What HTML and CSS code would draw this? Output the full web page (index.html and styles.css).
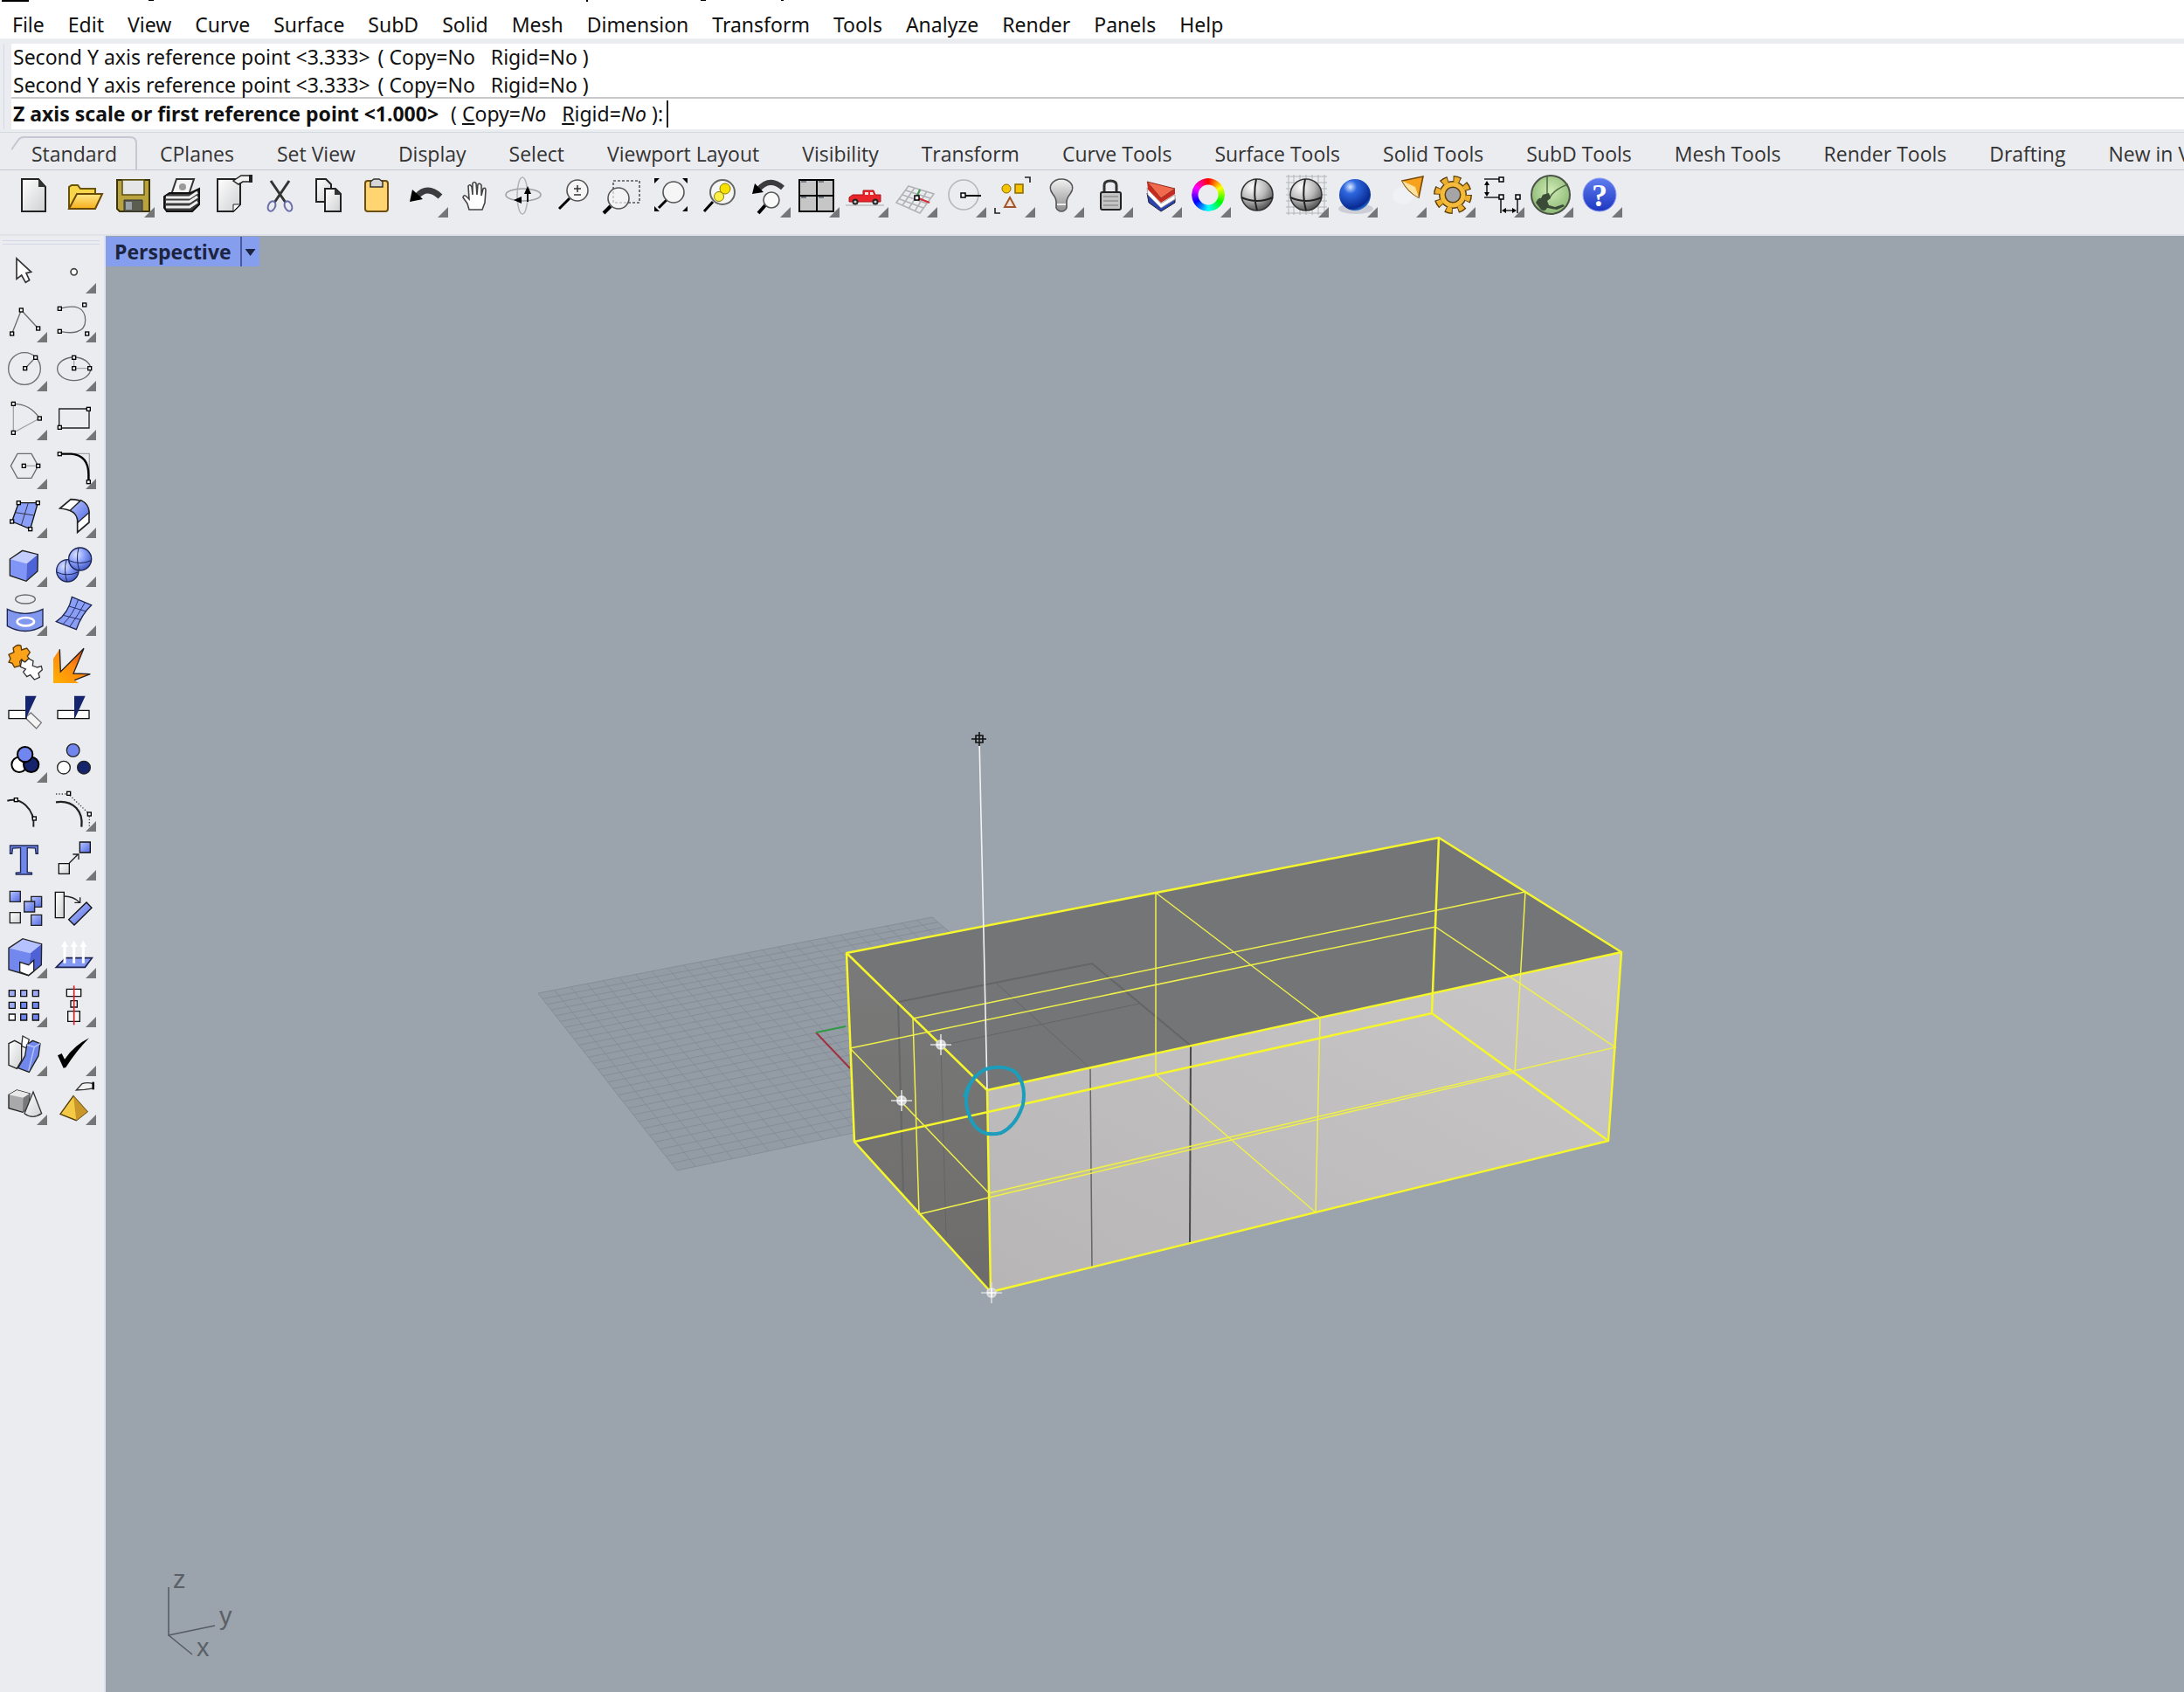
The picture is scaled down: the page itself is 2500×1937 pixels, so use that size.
FILE: index.html
```html
<!DOCTYPE html>
<html lang="en">
<head>
<meta charset="utf-8">
<title>Perspective - Modeler</title>
<link rel="stylesheet" href="styles.css">
</head>
<body>
<svg class="defs" aria-hidden="true">
  <defs>
    <linearGradient id="gBlue" x1="0" y1="0" x2="1" y2="1"><stop offset="0" stop-color="#b9c6ff"/><stop offset="1" stop-color="#5068e2"/></linearGradient>
    <linearGradient id="gGray" x1="0" y1="0" x2="1" y2="1"><stop offset="0" stop-color="#ffffff"/><stop offset="1" stop-color="#cfd0d2"/></linearGradient>
    <linearGradient id="gMetal" x1="0" y1="0" x2="0" y2="1"><stop offset="0" stop-color="#f2f2f2"/><stop offset="1" stop-color="#8c8c8e"/></linearGradient>
    <linearGradient id="gFolder" x1="0" y1="0" x2="0" y2="1"><stop offset="0" stop-color="#ffe989"/><stop offset="1" stop-color="#f6ae1b"/></linearGradient>
    <linearGradient id="gFire" x1="0" y1="1" x2="1" y2="0"><stop offset="0" stop-color="#ffb100"/><stop offset=".5" stop-color="#ff8a10"/><stop offset="1" stop-color="#d8361c"/></linearGradient>
    <radialGradient id="gBallBlue" cx=".35" cy=".3" r=".75"><stop offset="0" stop-color="#dfe6ff"/><stop offset=".5" stop-color="#869cf8"/><stop offset="1" stop-color="#4358c4"/></radialGradient>
    <radialGradient id="gBallGray" cx=".35" cy=".25" r=".85"><stop offset="0" stop-color="#ffffff"/><stop offset=".5" stop-color="#b9b9b9"/><stop offset="1" stop-color="#3c3c3c"/></radialGradient>
    <radialGradient id="gBallDeep" cx=".35" cy=".25" r=".85"><stop offset="0" stop-color="#dcebff"/><stop offset=".25" stop-color="#2f68e0"/><stop offset=".8" stop-color="#082a92"/><stop offset="1" stop-color="#3fa3f0"/></radialGradient>
    <radialGradient id="gBallGreen" cx=".5" cy=".4" r=".7"><stop offset="0" stop-color="#cfeab5"/><stop offset="1" stop-color="#7fb068"/></radialGradient>
    <linearGradient id="gHelp" x1="0" y1="0" x2="0" y2="1"><stop offset="0" stop-color="#5f7df0"/><stop offset="1" stop-color="#1c35c0"/></linearGradient>
    <linearGradient id="gFront" x1="0" y1="1" x2="1" y2="0"><stop offset="0" stop-color="#b7b5b5"/><stop offset="1" stop-color="#c9c7c8"/></linearGradient>
    <linearGradient id="gEnd" x1="0" y1="0" x2="0" y2="1"><stop offset="0" stop-color="#7a7a7a"/><stop offset="1" stop-color="#6d6c6a"/></linearGradient>
    <rect id="node" x="-6" y="-6" width="12" height="12" fill="#fff" stroke="#000" stroke-width="4"/>
    <rect id="dot" x="-2" y="-2" width="5" height="5" fill="#fff" stroke="#000" stroke-width="1.5"/>
    <g id="snap"><path d="M-12 0H12M0-12V12" stroke="#dcdcdc" stroke-width="1.6"/><circle r="5" fill="#c9cacc" stroke="#dedede" stroke-width="2"/><path d="M-5 0H5M0-5V5" stroke="#fff" stroke-width="1.6"/></g>
  </defs>
</svg>

<header class="top">
  <svg class="titlebar" viewBox="0 0 900 2" width="900" height="2" aria-hidden="true"><path d="M2 0H33V2H2ZM170 0h6v1h-6ZM671 0h2v2h-2ZM802 0h6v1h-6ZM894 0h3v1h-3Z"/></svg>
  <nav class="menubar">
    <button>File</button><button>Edit</button><button>View</button><button>Curve</button><button>Surface</button><button>SubD</button><button>Solid</button><button>Mesh</button><button>Dimension</button><button>Transform</button><button>Tools</button><button>Analyze</button><button>Render</button><button>Panels</button><button>Help</button>
  </nav>
</header>

<section class="command">
  <div class="history">
    <p>Second Y axis reference point &lt;3.333&gt; <span class="opts">( Copy=No <span class="opt">Rigid=No )</span></span></p>
    <p>Second Y axis reference point &lt;3.333&gt; <span class="opts">( Copy=No <span class="opt">Rigid=No )</span></span></p>
  </div>
  <div class="prompt">
    <label for="cmd"><b>Z axis scale or first reference point &lt;1.000&gt;</b> ( <u>C</u>opy=<i>No</i> <span class="opt"><u>R</u>igid=<i>No</i> ):</span></label>
    <input id="cmd" type="text" autocomplete="off">
  </div>
</section>

<section class="toolbars">
  <div class="tabs">
    <button class="active"><svg class="edge" viewBox="0 0 144 38" preserveAspectRatio="none" aria-hidden="true"><path d="M0 15L8 4Q10 1 14 1H136Q143 1 143 8V38"/></svg>Standard</button><button>CPlanes</button><button>Set View</button><button>Display</button><button>Select</button><button>Viewport Layout</button><button>Visibility</button><button>Transform</button><button>Curve Tools</button><button>Surface Tools</button><button>Solid Tools</button><button>SubD Tools</button><button>Mesh Tools</button><button>Render Tools</button><button>Drafting</button><button>New in V7</button>
  </div>
  <div class="tools">
    <button aria-label="New"><svg viewBox="0 0 56 56"><path d="M15 9H34L42 18V46H15Z" fill="url(#gGray)" stroke="#222" stroke-width="2"/><path d="M34 9V18H42Z" fill="#333"/></svg></button>
    <button aria-label="Open"><svg viewBox="0 0 56 56"><path d="M13 43V18L16 16H23L26 20H43V26" fill="#f8d649" stroke="#6b5306" stroke-width="2"/><path d="M13 43L22 26H51L43 43Z" fill="url(#gFolder)" stroke="#6b4a06" stroke-width="2"/></svg></button>
    <button class="more" aria-label="Save"><svg viewBox="0 0 56 56"><path d="M12 10H49V46H15L12 43Z" fill="#b9a33f" stroke="#3c3508" stroke-width="2"/><path d="M18 10H43V27H18Z" fill="#e4e6e8" stroke="#5b5010" stroke-width="1.5"/><path d="M20 33H41V46H20Z" fill="#5a5d50" stroke="#333"/><path d="M22 35h7v9h-7z" fill="#98a0a8"/></svg></button>
    <button aria-label="Print"><svg viewBox="0 0 56 56"><path d="M18 27L24 9H44L38 27Z" fill="#f5f5f5" stroke="#333" stroke-width="2"/><circle cx="31" cy="18" r="4" fill="#9a9a9a"/><path d="M10 29L16 25H40L50 20V38L42 46H13L10 42Z" fill="#3b3b3b" stroke="#111" stroke-width="2"/><path d="M12 30H39L48 24M12 35H39L48 29M12 41H39L48 35" stroke="#eee" stroke-width="3" fill="none"/></svg></button>
    <button aria-label="Document properties"><svg viewBox="0 0 56 56"><path d="M15 9H41V38L33 46H15Z" fill="url(#gGray)" stroke="#222" stroke-width="2"/><path d="M41 38H33V46Z" fill="#fff" stroke="#222"/><path d="M33 11L42 5H54V12H44L39 15Z" fill="#f2f2f2" stroke="#222" stroke-width="1.5"/><path d="M51 4h4v9h-4z" fill="#222"/></svg></button>
    <button aria-label="Cut"><svg viewBox="0 0 56 56"><path d="M20 11L37 36M41 11L24 36" stroke="#333" stroke-width="3"/><ellipse cx="21" cy="40" rx="4" ry="6" transform="rotate(25 21 40)" fill="none" stroke="#6a6fa8" stroke-width="2"/><ellipse cx="40" cy="40" rx="4" ry="6" transform="rotate(-25 40 40)" fill="none" stroke="#6a6fa8" stroke-width="2"/></svg></button>
    <button aria-label="Copy"><svg viewBox="0 0 56 56"><path d="M16 9H27L33 15V35H16Z" fill="url(#gGray)" stroke="#222" stroke-width="2"/><path d="M26 20H38L44 26V46H26Z" fill="url(#gGray)" stroke="#222" stroke-width="2"/><path d="M37 20V27H44Z" fill="#333"/></svg></button>
    <button aria-label="Paste"><svg viewBox="0 0 56 56"><rect x="16" y="11" width="26" height="35" rx="3" fill="#ffd572" stroke="#6b4e10" stroke-width="2"/><path d="M22 18V12L26 9H32L36 12V18Z" fill="#d6d6d6" stroke="#333" stroke-width="1.5"/></svg></button>
    <button class="more" aria-label="Undo"><svg viewBox="0 0 56 56"><path d="M19 29Q31 15 46 29" fill="none" stroke="#3c3c3e" stroke-width="7"/><path d="M11 35L14 21L26 32Z" fill="#000"/></svg></button>
    <button aria-label="Pan"><svg viewBox="0 0 56 56"><path d="M23 44L21 37L16 30Q17 26 20 29L23 32L22 17Q24 14 26 18L27 27L27 14Q29 11 31 14L32 27L33 15Q35 13 37 16L37 28L39 20Q42 18 42 22L41 36L38 44Z" fill="#fff" stroke="#444" stroke-width="1.6"/></svg></button>
    <button aria-label="Rotate view"><svg viewBox="0 0 56 56"><ellipse cx="28" cy="28" rx="6" ry="21" fill="none" stroke="#b4b5b8" stroke-width="1.6"/><ellipse cx="29" cy="27" rx="20" ry="7" fill="none" stroke="#a0a1a5" stroke-width="1.6"/><path d="M34 35V24" stroke="#111" stroke-width="2"/><path d="M30 26L34 17L38 26ZM27 29V37L18 33Z"/></svg></button>
    <button aria-label="Zoom dynamic"><svg viewBox="0 0 56 56"><path d="M26 31L14 43" stroke="#000" stroke-width="3"/><circle cx="35" cy="22" r="12" fill="#f6f6f7" stroke="#555" stroke-width="1.6"/><path d="M31 20H39M35 16V24M31 27H39" stroke="#333" stroke-width="1.5"/></svg></button>
    <button aria-label="Zoom window"><svg viewBox="0 0 56 56"><path d="M20 11H50V36H20Z" fill="none" stroke="#555" stroke-width="1.6" stroke-dasharray="3 2"/><path d="M17 40L9 48" stroke="#000" stroke-width="4"/><circle cx="26" cy="31" r="12" fill="#f6f6f7" fill-opacity=".7" stroke="#555" stroke-width="1.6"/></svg></button>
    <button aria-label="Zoom extents"><svg viewBox="0 0 56 56"><path d="M11 8h6l-6 6ZM49 8h-6l6 6ZM11 46h6l-6-6ZM49 46h-6l6-6Z"/><path d="M25 33L16 42" stroke="#000" stroke-width="3"/><circle cx="33" cy="24" r="12" fill="#f6f6f7" stroke="#555" stroke-width="1.6"/></svg></button>
    <button aria-label="Zoom selected"><svg viewBox="0 0 56 56"><path d="M22 35L12 46" stroke="#000" stroke-width="3"/><circle cx="33" cy="24" r="14" fill="#f6f6f7" stroke="#666" stroke-width="2"/><circle cx="36" cy="20" r="6" fill="#f6e100" stroke="#8b7d00"/><circle cx="29" cy="29" r="5.5" fill="#fff04a" stroke="#8b7d00"/></svg></button>
    <button class="more" aria-label="Undo view change"><svg viewBox="0 0 56 56"><path d="M18 21Q31 6 46 19" fill="none" stroke="#3c3c3e" stroke-width="6"/><path d="M11 26L14 14L24 24Z"/><path d="M26 39L18 48" stroke="#000" stroke-width="4"/><circle cx="33" cy="33" r="9" fill="#f9f9f9" stroke="#555" stroke-width="1.6"/></svg></button>
    <button class="more" aria-label="Four viewports"><svg viewBox="0 0 56 56"><path d="M9 10H48V46H9Z" fill="#c6c6c6" stroke="#000" stroke-width="2"/><path d="M29 10V46M9 28H48" stroke="#000" stroke-width="2"/><path d="M11 12h6M31 12h6M11 30h6M31 30h6" stroke="#234"/></svg></button>
    <button class="more" aria-label="Right view"><svg viewBox="0 0 56 56"><path d="M6 39H50" stroke="#c9cacc" stroke-width="2"/><path d="M10 35V30L14 27H26V22H38L40 27H46V35Z" fill="#e8252a" stroke="#b01418"/><path d="M28 24H32V27H28ZM34 24H37L38 27H34Z" fill="#f9e6e6"/><circle cx="17" cy="35" r="3.5" fill="#222"/><circle cx="40" cy="35" r="3.5" fill="#222"/><circle cx="17" cy="35" r="1.6" fill="#ccc"/><circle cx="40" cy="35" r="1.6" fill="#ccc"/></svg></button>
    <button class="more" aria-label="Set CPlane"><svg viewBox="0 0 56 56"><path d="M22 17L51 26L35 48L8 36ZM19 22L47 31M15 27L43 37M12 32L39 42M29 19L15 39M36 21L22 43M43 23L29 46" fill="none" stroke="#b0b2b5" stroke-width="1.6"/><path d="M31 30L35 21" stroke="#3c9a4c" stroke-width="2"/><path d="M31 30L46 36" stroke="#d22d35" stroke-width="2"/><use href="#dot" x="31" y="30"/></svg></button>
    <button class="more" aria-label="Object snap"><svg viewBox="0 0 56 56"><circle cx="29" cy="27" r="17" fill="none" stroke="#b5b7ba" stroke-width="1.6"/><path d="M29 28H49" stroke="#000" stroke-width="2"/><use href="#dot" x="28" y="27"/></svg></button>
    <button class="more" aria-label="Select objects"><svg viewBox="0 0 56 56"><path d="M43 7H49V13M9 42V48H15" fill="none" stroke="#222" stroke-width="1.6"/><circle cx="22" cy="20" r="5" fill="#f5c400" stroke="#8a6a00"/><path d="M32 15h9v10h-9z" fill="#f5c400" stroke="#8a6a00" stroke-width="1.5"/><path d="M26 30L32 41H20Z" fill="#f3e2d5" stroke="#a0562a" stroke-width="2"/></svg></button>
    <button class="more" aria-label="Hide objects"><svg viewBox="0 0 56 56"><path d="M23 35Q23 31 19 26Q14 19 18 14Q22 9 29 9Q36 9 40 14Q44 19 39 26Q35 31 35 35V42Q33 46 29 46Q25 46 23 42Z" fill="url(#gMetal)" stroke="#555" stroke-width="1.6"/><path d="M24 38H34" stroke="#eee" stroke-width="2"/></svg></button>
    <button class="more" aria-label="Lock objects"><svg viewBox="0 0 56 56"><path d="M22 25V16Q22 11 29 11Q36 11 36 16V25" fill="none" stroke="#333" stroke-width="3"/><rect x="18" y="24" width="23" height="20" rx="2" fill="#c4c4c4" stroke="#222" stroke-width="2"/><path d="M21 29H38M21 34H38M21 39H38" stroke="#777"/></svg></button>
    <button class="more" aria-label="Layers"><svg viewBox="0 0 56 56"><path d="M15 25L30 41L47 31V36L31 46L17 36Z" fill="#2b44b0" stroke="#223"/><path d="M15 19L31 37L47 27V32L31 42L16 27Z" fill="#fff" stroke="#aaa"/><path d="M15 12L31 31L47 20V26L31 36L16 21Z" fill="#c92a20"/><path d="M15 12L47 20L31 31Z" fill="#f26a4e" stroke="#8f2a1c"/></svg></button>
    <button class="more" aria-label="Object properties"><span class="wheel"></span></button>
    <button aria-label="Shaded viewport"><svg viewBox="0 0 56 56"><circle cx="29" cy="27" r="18" fill="url(#gBallGray)" stroke="#333" stroke-width="1.6"/><path d="M11 30Q29 38 47 30M28 9Q24 27 29 45" fill="none" stroke="#222" stroke-width="2"/></svg></button>
    <button class="more" aria-label="Render mesh"><svg viewBox="0 0 56 56"><path d="M6 6H53M6 13H53M6 20H53M6 27H53M6 34H53M6 41H53M6 48H53M9 4V50M15 4V50M22 4V50M29 4V50M36 4V50M43 4V50M50 4V50" stroke="#b2b4b8" stroke-width="1"/><circle cx="29" cy="27" r="18" fill="url(#gBallGray)" stroke="#333" stroke-width="1.6"/><path d="M11 30Q29 38 47 30M28 9Q24 27 29 45" fill="none" stroke="#222" stroke-width="2"/></svg></button>
    <button class="more" aria-label="Render"><svg viewBox="0 0 56 56"><ellipse cx="30" cy="43" rx="20" ry="6" fill="#b7b9c4" fill-opacity=".6"/><circle cx="29" cy="27" r="18" fill="url(#gBallDeep)"/></svg></button>
    <button class="more" aria-label="Spotlight"><svg viewBox="0 0 56 56"><ellipse cx="28" cy="28" rx="12" ry="10" fill="#f0f1f4"/><path d="M27 11L51 6L46 30Q34 24 27 11Z" fill="#f6a21c" stroke="#7a4708" stroke-width="1.6"/><path d="M27 11Q34 24 46 30L42 18Z" fill="#ffe3a1"/></svg></button>
    <button class="more" aria-label="Options"><svg viewBox="0 0 56 56"><circle cx="29" cy="27" r="18" fill="none" stroke="#5c3f0c" stroke-width="8" stroke-dasharray="8.1 6.04"/><circle cx="29" cy="27" r="12" fill="#a5a5a7" stroke="#5c3f0c" stroke-width="8"/><circle cx="29" cy="27" r="17.5" fill="none" stroke="#eeb02c" stroke-width="6" stroke-dasharray="6 7.74" stroke-dashoffset="-1"/><circle cx="29" cy="27" r="12" fill="none" stroke="#f3ba3c" stroke-width="5"/></svg></button>
    <button class="more" aria-label="Dimensions"><svg viewBox="0 0 56 56"><path d="M9 9H26M9 30H26M12 14V25M28 32V48M47 32V48M32 45H43" stroke="#222" stroke-width="1.6"/><path d="M9 16L12 11L15 16ZM9 24L12 29L15 24ZM34 42L29 45L34 48ZM41 42L46 45L41 48Z"/><use href="#dot" x="28" y="9"/><use href="#dot" x="28" y="29"/><use href="#dot" x="47" y="29"/></svg></button>
    <button class="more" aria-label="Grasshopper"><svg viewBox="0 0 56 56"><circle cx="29" cy="27" r="22" fill="url(#gBallGreen)" stroke="#4c5448" stroke-width="2"/><path d="M25 6V26M49 15Q34 20 28 30" stroke="#4f6b44" stroke-width="1.5" fill="none"/><path d="M12 36Q15 30 18 31L20 27L27 25L29 31L25 34L27 39L34 41L43 38L45 40L36 44L25 42Q23 47 18 44Z" fill="#3c4a38"/></svg></button>
    <button class="more" aria-label="Help"><svg viewBox="0 0 56 56"><circle cx="29" cy="27" r="19" fill="url(#gHelp)" stroke="#8b9cf0" stroke-width="1"/><text x="29" y="40" class="qmark">?</text></svg></button>
  </div>
</section>

<div class="workspace">
  <aside class="sidebar">
    <button aria-label="Select"><svg viewBox="0 42 168 168"><path d="M57 78V148L74 135L88 160L101 152L90 128L107 124Z" fill="#fff" stroke="#333" stroke-width="5"/></svg></button>
    <button class="more" aria-label="Point"><svg viewBox="168 42 168 168"><circle cx="254" cy="124" r="11" fill="#fff" stroke="#444" stroke-width="5"/></svg></button>

    <button class="more" aria-label="Polyline"><svg viewBox="0 210 168 168"><path d="M41 336L73 255L131 318" class="line"/><use href="#node" x="41" y="336"/><use href="#node" x="73" y="255"/><use href="#node" x="131" y="318"/></svg></button>
    <button class="more" aria-label="Control point curve"><svg viewBox="168 210 168 168"><path d="M205 250C260 235 293 245 293 290C293 335 245 337 205 328" class="line"/><use href="#node" x="205" y="250"/><use href="#node" x="290" y="237"/><use href="#node" x="205" y="328"/><use href="#node" x="299" y="336"/></svg></button>

    <button class="more" aria-label="Circle"><svg viewBox="0 378 168 168"><circle cx="84" cy="456" r="55" class="line"/><path d="M86 455L122 418" class="line"/><use href="#node" x="86" y="455"/><use href="#node" x="122" y="418"/></svg></button>
    <button class="more" aria-label="Ellipse"><svg viewBox="168 378 168 168"><ellipse cx="254" cy="457" rx="57" ry="40" class="line"/><path d="M254 418V455H308" class="faint"/><use href="#node" x="254" y="418"/><use href="#node" x="254" y="455"/><use href="#node" x="308" y="455"/></svg></button>

    <button class="more" aria-label="Arc"><svg viewBox="0 546 168 168"><path d="M46 577V676L136 627" class="faint"/><path d="M46 577Q104 577 136 627" class="line"/><use href="#node" x="46" y="577"/><use href="#node" x="136" y="627"/><use href="#node" x="46" y="676"/></svg></button>
    <button class="more" aria-label="Rectangle"><svg viewBox="168 546 168 168"><path d="M203 594H306V660H203Z" class="line dark"/><use href="#node" x="304" y="595"/><use href="#node" x="205" y="658"/></svg></button>

    <button class="more" aria-label="Polygon"><svg viewBox="0 714 168 168"><path d="M37 790L60 748H108L131 790L108 832H60Z" class="line"/><path d="M82 790H131" class="faint"/><use href="#node" x="82" y="790"/><use href="#node" x="131" y="790"/></svg></button>
    <button class="more" aria-label="Fillet"><svg viewBox="168 714 168 168"><path d="M250 748H307V845" class="faint"/><path d="M205 749H245Q304 754 304 820V845" fill="none" stroke="#000" stroke-width="7"/><use href="#node" x="205" y="749"/><use href="#node" x="304" y="845"/></svg></button>

    <button class="more" aria-label="Surface from corner points"><svg viewBox="0 882 168 168"><path d="M64 917H130L104 1007L41 981Z" fill="#8aa0f8" stroke="#111" stroke-width="4"/><path d="M97 917L73 994M52 950L118 960" stroke="#334" stroke-width="3"/><use href="#node" x="64" y="917"/><use href="#node" x="130" y="917"/><use href="#node" x="104" y="1007"/><use href="#node" x="41" y="981"/></svg></button>
    <button class="more" aria-label="Revolve"><svg viewBox="168 882 168 168"><path d="M206 936L243 905Q300 905 306 950V984L266 1018V972Q262 942 206 936Z" fill="#fff" stroke="#222" stroke-width="5"/><path d="M241 943L278 908Q306 922 306 950L268 984Q264 952 241 943Z" fill="url(#gBlue)" stroke="#222" stroke-width="4"/></svg></button>

    <button class="more" aria-label="Box"><svg viewBox="0 0 168 168"><path d="M34 60L77 31L130 44L92 76Z" fill="#c3cdff"/><path d="M34 60L92 76L90 136L34 117Z" fill="#8095f6"/><path d="M92 76L130 44L129 102L90 136Z" fill="#4f63d8"/><path d="M34 60L77 31L130 44L129 102L90 136L34 117Z" fill="none" stroke="#222" stroke-width="4"/></svg></button>
    <button class="more" aria-label="Boolean union"><svg viewBox="168 0 168 168"><circle cx="232" cy="100" r="38" fill="url(#gBallBlue)" stroke="#1b2350" stroke-width="4"/><path d="M195 105Q230 122 268 105M228 63Q218 100 230 137" fill="none" stroke="#1b2350" stroke-width="3"/><circle cx="275" cy="60" r="39" fill="url(#gBallBlue)" stroke="#1b2350" stroke-width="4"/><path d="M237 65Q275 82 313 65M270 22Q260 60 272 98" fill="none" stroke="#1b2350" stroke-width="3"/></svg></button>

    <button class="more" aria-label="Project curve"><svg viewBox="0 168 168 168"><ellipse cx="87" cy="198" rx="34" ry="15" class="line"/><path d="M25 232Q87 262 147 232V290Q87 325 25 290Z" fill="#8298ee" stroke="#1d2550" stroke-width="4"/><ellipse cx="88" cy="275" rx="29" ry="14" fill="none" stroke="#fff" stroke-width="8"/></svg></button>
    <button class="more" aria-label="Mesh"><svg viewBox="168 168 168 168"><path d="M247 190L314 218Q280 250 262 302L193 275Q236 245 247 190Z" fill="#8b9ff6" stroke="#1d2550" stroke-width="4"/><path d="M269 199Q252 250 216 284M292 209Q270 250 239 293M237 222L296 240M217 253L276 268" fill="none" stroke="#26306c" stroke-width="3"/></svg></button>

    <button aria-label="Join"><svg viewBox="0 336 168 168"><path d="M30 388L48 380L45 366Q60 350 72 358L74 372L92 366L103 380L94 394L104 408L84 414L74 404L68 412L70 426L50 432L42 418L30 414L36 402Z" fill="#f9a21a" stroke="#5c3a08" stroke-width="4"/><path d="M74 408L86 414L98 402L114 410L112 426L128 432L142 428L145 440L132 452L136 466L118 474L104 458L92 464L80 448L88 438L70 430Z" fill="#fff" stroke="#333" stroke-width="4"/></svg></button>
    <button aria-label="Explode"><svg viewBox="168 336 168 168"><path d="M183 486V402L205 370L208 447L288 367L252 453L310 455L256 476L270 486Z" fill="url(#gFire)"/><path d="M205 370L208 447L288 367L252 453L310 455L256 476" fill="none" stroke="#222" stroke-width="4"/></svg></button>

    <button aria-label="Trim"><svg viewBox="0 504 168 168"><path d="M92 600L106 588L142 622L125 642L90 608Z" fill="#f4f4f5" stroke="#777" stroke-width="4"/><path d="M30 580H90V608H30Z" fill="#fff" stroke="#111" stroke-width="4"/><path d="M87 530H125L90 606H87Z" fill="#14246e"/></svg></button>
    <button aria-label="Split"><svg viewBox="168 504 168 168"><path d="M198 580H306V608H198Z" fill="#fff" stroke="#111" stroke-width="4"/><path d="M255 530H293L258 606H255Z" fill="#14246e"/></svg></button>

    <button class="more" aria-label="Group"><svg viewBox="0 672 168 168"><g stroke="#000" stroke-width="6"><circle cx="66" cy="766" r="26" fill="#fff"/><circle cx="107" cy="766" r="26" fill="#16246c"/><circle cx="86" cy="731" r="26" fill="#7186ee"/></g></svg></button>
    <button aria-label="Ungroup"><svg viewBox="168 672 168 168"><g stroke="#222" stroke-width="4"><circle cx="251" cy="717" r="22" fill="#7186ee"/><circle cx="219" cy="776" r="22" fill="#fff"/><circle cx="288" cy="776" r="22" fill="#16246c"/></g></svg></button>

    <button aria-label="Edit points"><svg viewBox="0 840 168 168"><path d="M25 890Q60 880 88 905Q120 935 115 980" fill="none" stroke="#222" stroke-width="6"/><use href="#node" x="55" y="887"/><use href="#node" x="118" y="951"/></svg></button>
    <button class="more" aria-label="Control points"><svg viewBox="168 840 168 168"><path d="M192 867H235L307 936V980" fill="none" stroke="#444" stroke-width="4" stroke-dasharray="4 6"/><path d="M192 895Q235 888 262 915Q285 940 280 980" fill="none" stroke="#222" stroke-width="7"/><use href="#node" x="236" y="865"/><use href="#node" x="307" y="936"/></svg></button>

    <button aria-label="Text"><svg viewBox="0 -12 168 168"><text x="82" y="122" class="tee">T</text></svg></button>
    <button class="more" aria-label="Move"><svg viewBox="168 -12 168 168"><path d="M202 86H238V121H202Z" fill="url(#gGray)" stroke="#111" stroke-width="4"/><path d="M274 12H310V48H274Z" fill="url(#gBlue)" stroke="#111" stroke-width="4"/><path d="M238 84L268 54M250 54H270V72" fill="none" stroke="#222" stroke-width="4"/></svg></button>

    <button aria-label="Copy objects"><svg viewBox="0 156 168 168"><g stroke="#222" stroke-width="4"><path d="M34 181h36v36H34z" fill="url(#gBlue)"/><path d="M107 199h36v36h-36z" fill="url(#gBlue)"/><path d="M83 216h36v36H83z" fill="url(#gBlue)"/><path d="M34 254h36v36H34z" fill="url(#gGray)"/><path d="M107 262h36v36h-36z" fill="url(#gBlue)"/></g></svg></button>
    <button aria-label="Rotate"><svg viewBox="168 156 168 168"><path d="M190 184H220V272H190Z" fill="url(#gGray)" stroke="#111" stroke-width="4"/><path d="M236 278L297 219L315 238L255 297Z" fill="url(#gBlue)" stroke="#111" stroke-width="4"/><path d="M220 198Q252 198 273 219M256 220H275V202" fill="none" stroke="#222" stroke-width="4"/></svg></button>

    <button class="more" aria-label="Solid editing"><svg viewBox="0 324 168 168"><path d="M30 376L78 344L143 362L104 394Z" fill="#b5c2ff"/><path d="M30 376L104 394L98 470L30 450Z" fill="#7288ee"/><path d="M104 394L143 362L142 434L98 470Z" fill="#4e62d6"/><path d="M68 424L98 434L116 418V456L98 470L68 458Z" fill="#fff" stroke="#222" stroke-width="4"/><path d="M30 376L78 344L143 362L142 434L98 470L30 450Z" fill="none" stroke="#222" stroke-width="4"/></svg></button>
    <button class="more" aria-label="Extrude"><svg viewBox="168 324 168 168"><path d="M193 442L225 410H316L292 442Z" fill="#8399f4" stroke="#1d2550" stroke-width="5"/><path d="M222 428V366M254 428V366M286 428V366" stroke="#fff" stroke-width="9"/><path d="M210 372L222 350L234 372ZM242 372L254 350L266 372ZM274 372L286 350L298 372Z" fill="#fff"/></svg></button>

    <button class="more" aria-label="Array"><svg viewBox="0 492 168 168"><g fill="#9dabf4" stroke="#111" stroke-width="4"><path d="M31 521h21v21H31zM71 521h21v21H71zM112 521h21v21h-21zM31 562h21v21H31z"/><path d="M71 562h21v21H71zM112 562h21v21h-21zM71 603h21v21H71zM112 603h21v21h-21z" fill="#6f86ee"/><path d="M31 603h21v21H31z" fill="#fff"/></g></svg></button>
    <button class="more" aria-label="Align"><svg viewBox="168 492 168 168"><path d="M229 517H278V542H229ZM243 557H265V579H243ZM233 593H274V628H233Z" fill="#f6f6f6" stroke="#111" stroke-width="4"/><path d="M254 505V640" stroke="#d1222c" stroke-width="5"/></svg></button>

    <button class="more" aria-label="Twist"><svg viewBox="0 660 168 168"><path d="M74 712L78 678L100 690L92 720Z" fill="#fff" stroke="#333" stroke-width="4"/><path d="M30 704L50 694L74 706V762L58 790L30 778Z" fill="url(#gGray)" stroke="#222" stroke-width="4"/><path d="M92 708L112 694L138 704L132 746L100 802L62 788L86 746Z" fill="#7088ec" stroke="#222" stroke-width="4"/><path d="M92 708L118 716L138 704M118 716L98 798" fill="none" stroke="#b9c6ff" stroke-width="4"/></svg></button>
    <button class="more" aria-label="Check"><svg viewBox="168 660 168 168"><path d="M198 745L212 738L222 758Q255 710 306 685Q262 730 226 786L218 788Z" fill="#000"/></svg></button>

    <button class="more" aria-label="Primitives"><svg viewBox="0 828 168 168"><path d="M30 880L58 864L102 876L98 920L78 940L30 926Z" fill="#a9a9ab" stroke="#222" stroke-width="4"/><path d="M30 880L58 864L102 876L80 890Z" fill="#e9e9ea"/><path d="M80 890L102 876L98 920L78 940Z" fill="#77787a"/><path d="M114 870L143 944Q112 966 84 944Z" fill="url(#gGray)" stroke="#333" stroke-width="4"/></svg></button>
    <button class="more" aria-label="Pick object"><svg viewBox="168 828 168 168"><path d="M252 884L300 938L262 968L207 946Z" fill="#f3c945" stroke="#4f3b08" stroke-width="4"/><path d="M252 884L262 968L300 938Z" fill="#c9962a"/><path d="M262 864L282 842Q300 836 320 842V858L290 862Z" fill="#f2f2f2" stroke="#333" stroke-width="4"/><path d="M316 836h8v26h-8z" fill="#111"/></svg></button>
  </aside>

  <main class="viewport">
    <svg class="scene" viewBox="121 270 2379 1667" preserveAspectRatio="xMinYMin slice">
      <path id="ground" d="M616 1137L1067 1050L1282 1232L775 1340Z" fill="#939ca4"/>
      <path id="grid" class="grid"/>
      <path d="M934 1182L973 1223" stroke="#a03040" stroke-width="2"/>
      <path d="M934 1182L968 1175" stroke="#2f9a44" stroke-width="2"/>

      <path d="M969 1091L1647 959L1856 1090L1130 1248Z" fill="#747577"/>
      <path d="M969 1091L1130 1248L1134 1479L978 1307Z" fill="url(#gEnd)"/>
      <path d="M1130 1248L1856 1090L1841 1306L1134 1479Z" fill="url(#gFront)"/>

      <path d="M1034 1364L1028 1147L1250 1103L1363 1197" class="hidden"/>
      <path d="M1083 1416L1077 1197L1304 1149M1141 1126L1248 1223" class="hidden thin"/>
      <path d="M1248 1223L1250 1451" stroke="#666" stroke-width="1.5"/>
      <path d="M1363 1197L1362 1424" stroke="#4a4a4c" stroke-width="2"/>

      <path d="M1132 1366L1730 1227L1132 1371Z" fill="#d2ce6a" fill-opacity=".3"/>
      <path class="iso" d="M973 1200L1132 1366L1849 1199L1643 1061ZM1045 1166L1746 1021L1734 1228L1052 1390ZM1323 1022L1511 1165L1506 1388L1323 1230Z"/>
      <path class="edge-line" d="M969 1091L1647 959L1856 1090L1130 1248ZM978 1307L1639 1160L1841 1306L1134 1479ZM969 1091L978 1307M1130 1248L1134 1479M1856 1090L1841 1306M1647 959L1639 1160"/>

      <path d="M1121 846L1130 1247" stroke="#f4f4f4" stroke-width="1.6"/>
      <use href="#snap" x="1077" y="1196"/>
      <use href="#snap" x="1032" y="1260"/>
      <use href="#snap" x="1135" y="1480"/>
      <path d="M1112 846H1129M1121 838V854" stroke="#111" stroke-width="1.6"/>
      <path d="M1117 842h8v8h-8z" fill="none" stroke="#111" stroke-width="1.6"/>
      <path d="M1104 1256Q1110 1234 1128 1224Q1150 1218 1163 1228Q1175 1242 1171 1264Q1164 1288 1146 1297Q1126 1302 1115 1288Q1105 1272 1106 1256Q1109 1240 1117 1231" fill="none" stroke="#1c9dbb" stroke-width="4"/>

      <path d="M193 1817V1872L246 1861M193 1872L220 1894" fill="none" stroke="#575d64" stroke-width="1.6"/>
      <g class="axis"><text x="198" y="1818">z</text><text x="251" y="1860">y</text><text x="225" y="1896">x</text></g>
    </svg>
    <div class="view-title"><button>Perspective</button><button class="arrow" aria-label="Viewport menu"></button></div>
  </main>
</div>
<script src="grid.js"></script>
</body>
</html>
```
FILE: styles.css
```css
* { box-sizing: border-box; }
body { margin: 0; background: #ebecf0; color: #111; font: 23px/32px "Noto Sans", "Open Sans", sans-serif; overflow-x: hidden; }
button { position: relative; margin: 0; padding: 0; border: 0; background: none; color: inherit; font: inherit; white-space: nowrap; }
svg { display: block; }
.defs { position: absolute; width: 0; height: 0; }

.top { background: #fff; height: 45px; border-bottom: 1px solid #eff0f1; }
.menubar { display: flex; gap: 27px; padding: 10px 14px 0; line-height: 32px; }

.command { margin-top: 5px; margin-left: 4px; padding-left: 5px; border-left: 1px solid #d3d7ea; height: 98px; background: linear-gradient(90deg, #ebecf0 8px, #fff 8px); }
.history { height: 63px; border-bottom: 2px solid #c9c9cb; margin-left: 3px; padding: 0 2px; }
.history p { margin: 0; height: 32px; line-height: 30px; white-space: nowrap; }
.opts { margin-left: 3px; }
.opt { margin-left: 12px; }
.prompt { display: flex; align-items: center; margin-left: 3px; padding: 1px 2px; white-space: nowrap; }
.prompt input { flex: 1; height: 31px; margin: 0 0 0 4px; padding: 0; border: 0; border-left: 2px solid #222; background: none; font: inherit; outline: 0; }
.prompt b { margin-right: 8px; }

.toolbars { margin-top: 3px; border-top: 1px solid #d3dadd; border-bottom: 2px solid #dfe2e9; padding-top: 4px; height: 119px; }
.tabs { display: flex; gap: 49px; height: 39px; padding-left: 36px; border-bottom: 1px solid #c3c8d2; color: #333; font-family: "Open Sans", sans-serif; line-height: 40px; overflow: hidden; }
.tabs .edge { position: absolute; left: -23px; top: 0; width: 144px; height: 39px; fill: none; stroke: #c3c8d2; stroke-width: 2; }
.tools { display: flex; padding: 1px 10px 0; }
.tools button, .sidebar button { width: 56px; height: 56px; flex: none; }
.tools svg, .sidebar svg { width: 56px; height: 56px; }
.more::after { content: ""; position: absolute; right: 1px; bottom: 3px; width: 12px; height: 12px; background: #757678; clip-path: polygon(100% 0, 100% 100%, 0 100%); }
.wheel { display: block; width: 38px; height: 38px; margin: 0 0 2px 10px; border-radius: 50%; background: conic-gradient(red, #ff0, #0f0, #0ff, #00f, #f0f, red); -webkit-mask: radial-gradient(circle, transparent 11px, #000 12px); mask: radial-gradient(circle, transparent 11px, #000 12px); }
.qmark { font: bold 36px "Liberation Serif", serif; fill: #fff; text-anchor: middle; }

.workspace { display: flex; }
.sidebar { flex: none; width: 121px; padding-top: 5px; display: grid; grid-template-columns: 56px 56px; align-content: start; border-right: 2px solid #dde2f2; }
.sidebar::before { content: ""; grid-column: 1 / 3; height: 3px; margin: 0 -2px 4px 3px; border: 1px solid #d3d7ea; border-width: 1px 0; }
.sidebar .more::after { right: 2px; bottom: 4px; }
.line { fill: none; stroke: #6b6c70; stroke-width: 4; }
.line.dark { stroke: #222; }
.faint { fill: none; stroke: #a3a4a8; stroke-width: 4; }
.tee { font: bold 150px "Liberation Serif", serif; fill: #6f86ea; stroke: #222a55; stroke-width: 4px; text-anchor: middle; }

.viewport { position: relative; flex: 1; min-width: 0; background: #9ba3ac; }
.scene { width: 100%; height: auto; }
.grid { fill: none; stroke: #858e96; stroke-width: 1; }
.hidden { fill: none; stroke: #646567; stroke-width: 2; }
.hidden.thin { stroke-width: 1; }
.iso { fill: none; stroke: #eff04a; stroke-width: 1.5; }
.edge-line { fill: none; stroke: #f6f62c; stroke-width: 2.5; stroke-linejoin: round; }
.axis { font: 29px "Liberation Sans", sans-serif; fill: #5b6067; }
.view-title { position: absolute; left: 0; top: 1px; display: flex; height: 34px; background: #869eee; color: #1b2440; font: bold 23px/34px "Open Sans", sans-serif; }
.view-title button { padding: 0 10px; }
.view-title .arrow { width: 22px; padding: 0; border-left: 2px solid #4a5a9c; }
.arrow::before { content: ""; position: absolute; left: 4px; top: 14px; width: 12px; height: 8px; background: #1b2440; clip-path: polygon(0 0, 100% 0, 50% 100%); }
```
FILE: grid.js
```js
// Ground-plane grid: projects evenly spaced lines of the unit square onto the plane's four corners.
const corners = [[616, 1137], [1067, 1050], [1282, 1232], [775, 1340]];
const columns = 25, rows = 28;
const [[x0, y0], [x1, y1], [x2, y2], [x3, y3]] = corners;
const dx1 = x1 - x2, dx2 = x3 - x2, sx = x0 - x1 + x2 - x3;
const dy1 = y1 - y2, dy2 = y3 - y2, sy = y0 - y1 + y2 - y3;
const det = dx1 * dy2 - dx2 * dy1;
const g = (sx * dy2 - dx2 * sy) / det, h = (dx1 * sy - sx * dy1) / det;
const a = x1 - x0 + g * x1, b = x3 - x0 + h * x3;
const d = y1 - y0 + g * y1, e = y3 - y0 + h * y3;
const point = (u, v) => {
  const w = g * u + h * v + 1;
  return ((a * u + b * v + x0) / w).toFixed(1) + " " + ((d * u + e * v + y0) / w).toFixed(1);
};
let path = "";
for (let i = 0; i <= columns; i++) path += `M${point(i / columns, 0)}L${point(i / columns, 1)}`;
for (let j = 0; j <= rows; j++) path += `M${point(0, j / rows)}L${point(1, j / rows)}`;
document.getElementById("grid").setAttribute("d", path);
```
